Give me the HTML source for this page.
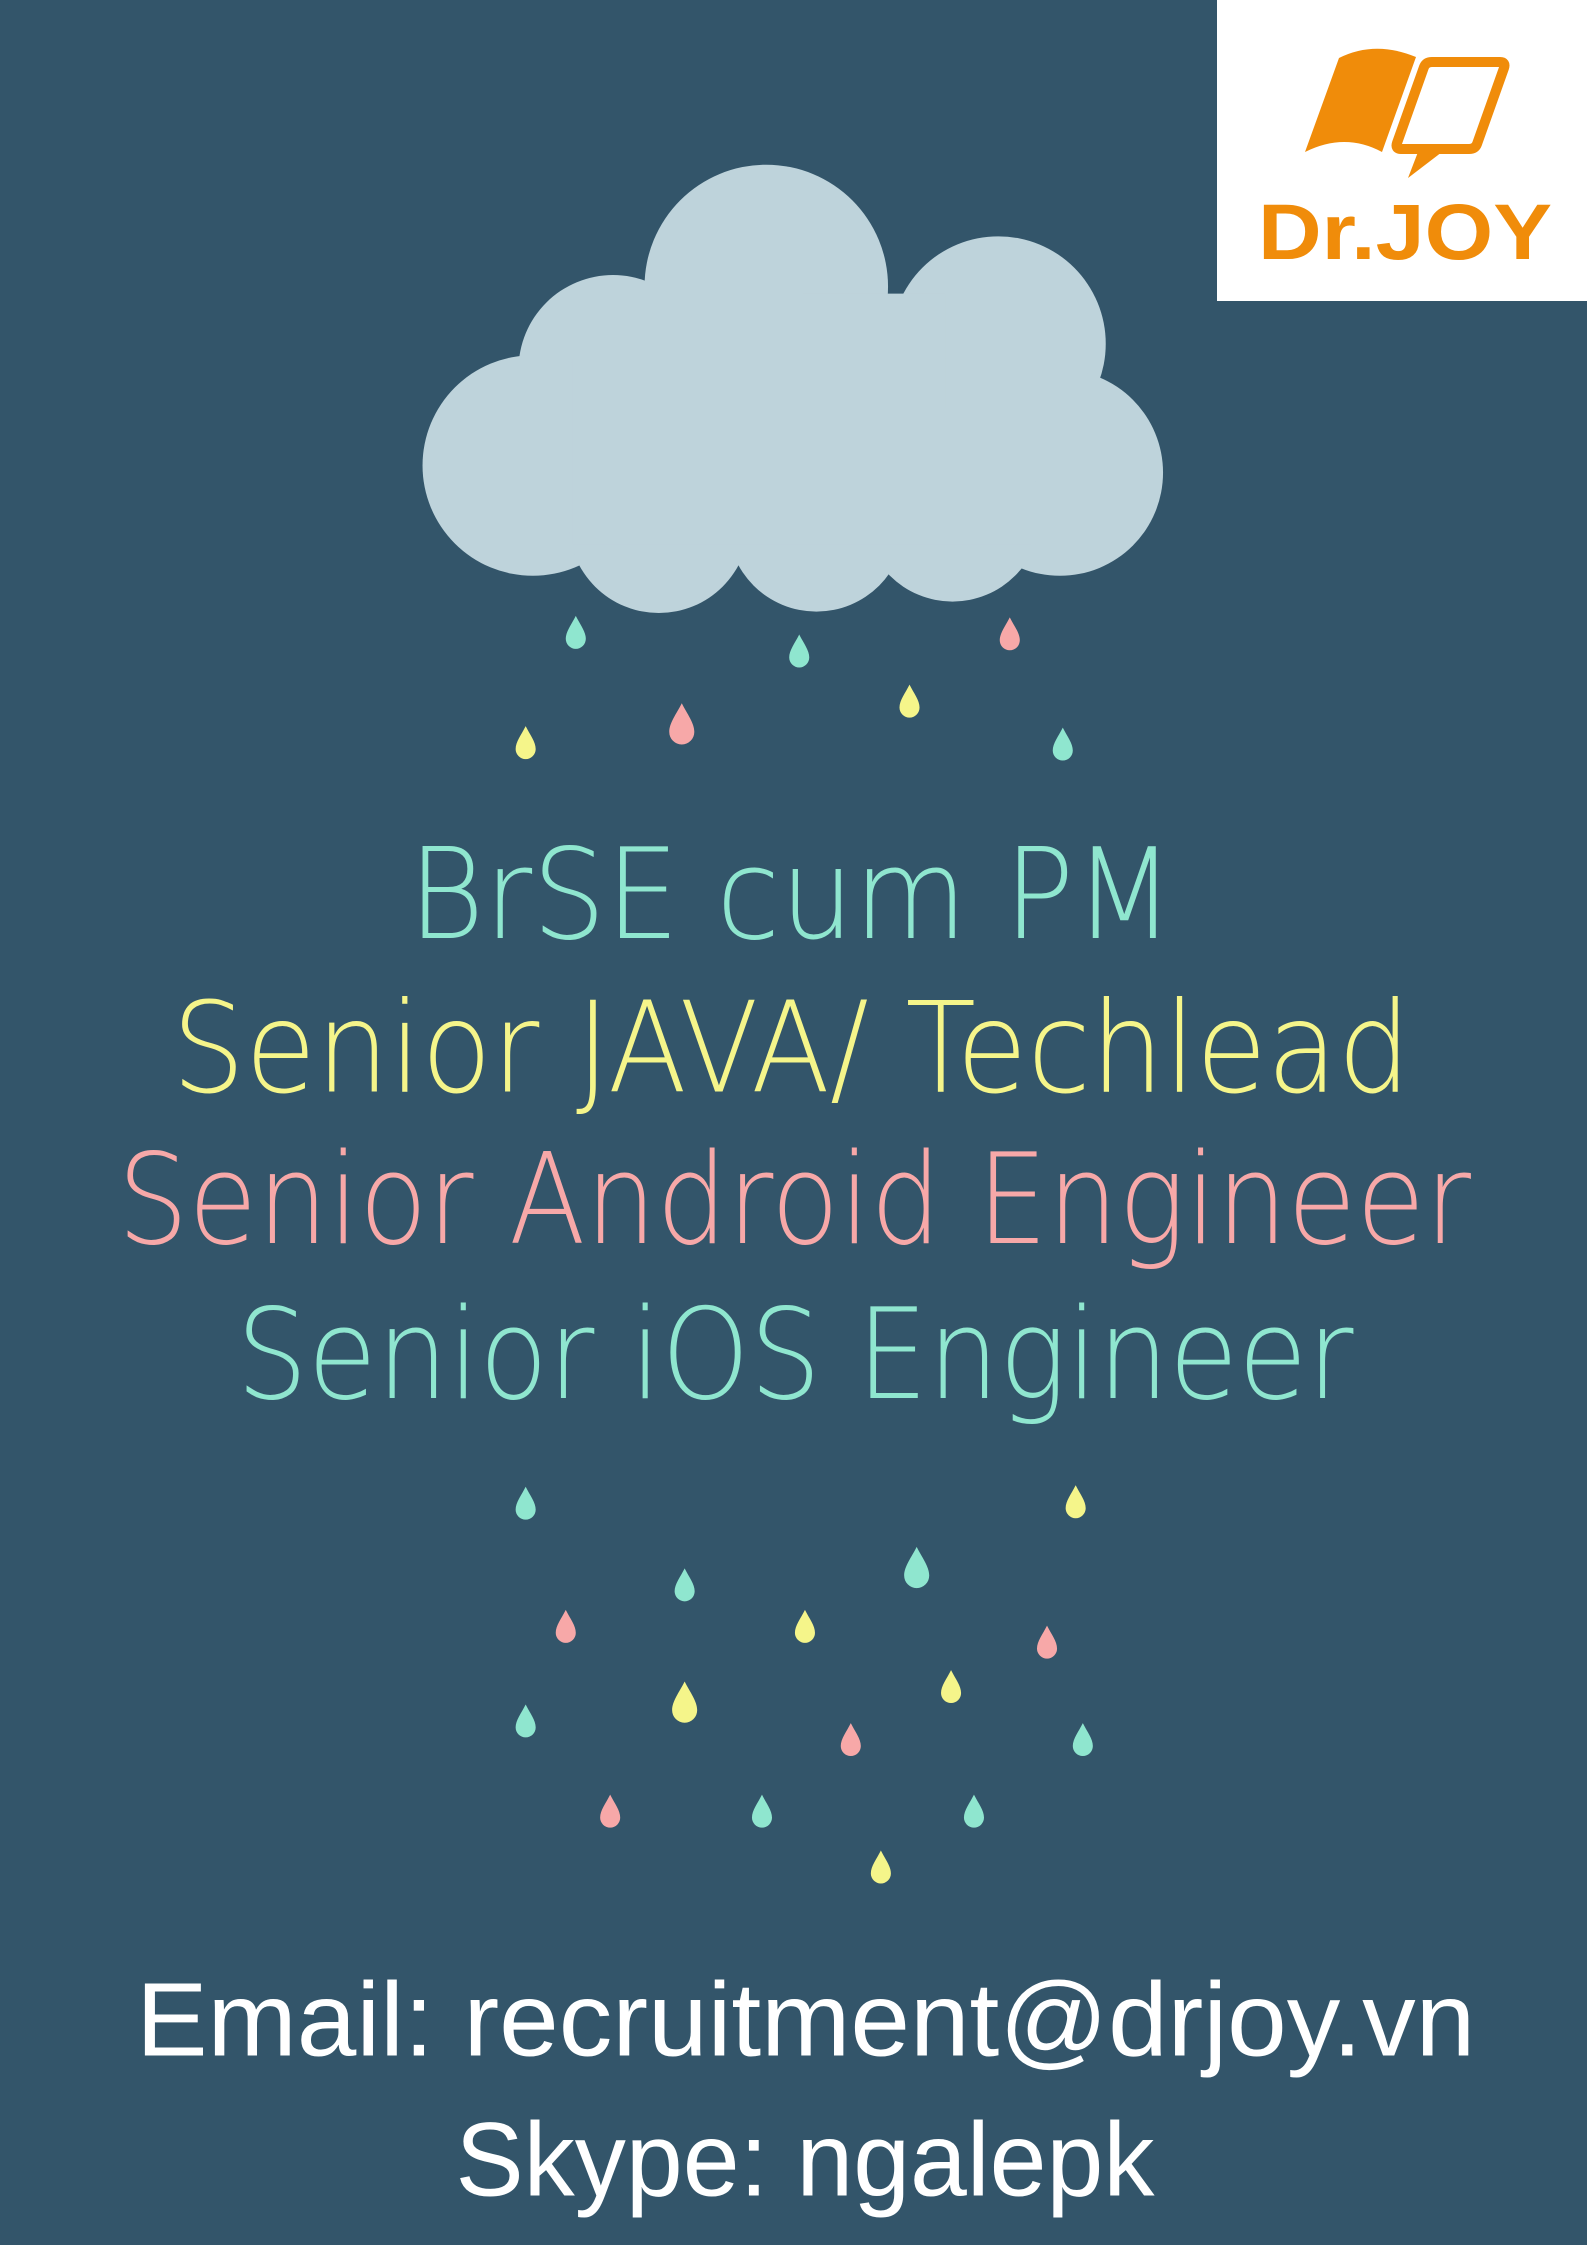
<!DOCTYPE html>
<html><head><meta charset="utf-8"><style>
html,body{margin:0;padding:0;background:#33556a;}
body{width:1587px;height:2245px;position:relative;overflow:hidden;}
svg{position:absolute;left:0;top:0;}
</style></head><body>
<svg width="1587" height="2245" viewBox="0 0 1108 1567.4" xmlns="http://www.w3.org/2000/svg">
<rect width="1108" height="1568" fill="#33556a"/>
<defs>
<path id="d" d="M0,-12 C3,-6 7,-1 7,4 A7,7 0 0 1 -7,4 C-7,-1 -3,-6 0,-12 Z"/>
<clipPath id="cc"><rect x="294" y="0" width="521" height="600"/></clipPath>
</defs>
<g fill="#bed3db" clip-path="url(#cc)">
<circle cx="535" cy="200" r="85"/>
<circle cx="697" cy="240" r="75"/>
<circle cx="428" cy="258" r="66"/>
<circle cx="372" cy="325" r="77"/>
<circle cx="740" cy="330" r="72"/>
<circle cx="460" cy="365" r="63"/>
<circle cx="570" cy="365" r="62"/>
<circle cx="665" cy="358" r="62"/>
<rect x="400" y="250" width="320" height="130"/>
<rect x="560" y="205" width="100" height="80"/>
</g>
<g>
<use href="#d" transform="translate(402,442)" fill="#8fe6cf"/>
<use href="#d" transform="translate(558,455)" fill="#8fe6cf"/>
<use href="#d" transform="translate(705,443)" fill="#f7a8a8"/>
<use href="#d" transform="translate(635,490)" fill="#f5f58a"/>
<use href="#d" transform="translate(476,506) scale(1.25)" fill="#f7a8a8"/>
<use href="#d" transform="translate(367,519)" fill="#f5f58a"/>
<use href="#d" transform="translate(742,520)" fill="#8fe6cf"/>
<use href="#d" transform="translate(367,1050)" fill="#8fe6cf"/>
<use href="#d" transform="translate(751,1049)" fill="#f5f58a"/>
<use href="#d" transform="translate(640,1095) scale(1.25)" fill="#8fe6cf"/>
<use href="#d" transform="translate(478,1107)" fill="#8fe6cf"/>
<use href="#d" transform="translate(395,1136)" fill="#f7a8a8"/>
<use href="#d" transform="translate(562,1136)" fill="#f5f58a"/>
<use href="#d" transform="translate(731,1147)" fill="#f7a8a8"/>
<use href="#d" transform="translate(664,1178)" fill="#f5f58a"/>
<use href="#d" transform="translate(478,1189) scale(1.25)" fill="#f5f58a"/>
<use href="#d" transform="translate(367,1202)" fill="#8fe6cf"/>
<use href="#d" transform="translate(756,1215)" fill="#8fe6cf"/>
<use href="#d" transform="translate(594,1215)" fill="#f7a8a8"/>
<use href="#d" transform="translate(426,1265)" fill="#f7a8a8"/>
<use href="#d" transform="translate(532,1265)" fill="#8fe6cf"/>
<use href="#d" transform="translate(680,1265)" fill="#8fe6cf"/>
<use href="#d" transform="translate(615,1304)" fill="#f5f58a"/>
</g>
<g font-family="DejaVu Sans, Liberation Sans, sans-serif" font-weight="200" font-size="88">
<text x="285" y="655" textLength="535" lengthAdjust="spacingAndGlyphs" fill="#8fe6cf">BrSE cum PM</text>
<text x="120" y="762" textLength="865" lengthAdjust="spacingAndGlyphs" fill="#f5f58a">Senior JAVA/ Techlead</text>
<text x="82" y="868" textLength="945" lengthAdjust="spacingAndGlyphs" fill="#f7a8a8">Senior Android Engineer</text>
<text x="165" y="976" textLength="780" lengthAdjust="spacingAndGlyphs" fill="#8fe6cf">Senior iOS Engineer</text>
</g>
<g font-family="Liberation Sans, sans-serif" font-size="73" fill="#ffffff">
<text x="95" y="1435" textLength="935" lengthAdjust="spacingAndGlyphs">Email: recruitment@drjoy.vn</text>
<text x="318" y="1533" textLength="488" lengthAdjust="spacingAndGlyphs">Skype: ngalepk</text>
</g>
</svg>
<svg width="1587" height="2245" viewBox="0 0 1587 2245" xmlns="http://www.w3.org/2000/svg">
<rect x="1217" y="0" width="370" height="301" fill="#ffffff"/>
<path d="M1339,58 Q1375,40 1416,57 L1382,152 Q1345,132 1305,152 Z" fill="#f08c0a"/>
<path d="M1432,62 L1500,62 Q1506,62 1504,68 L1477,144 Q1475,149 1469,149 L1401,149 Q1395,149 1397,143 L1424,67 Q1426,62 1432,62 Z" fill="none" stroke="#f08c0a" stroke-width="10"/>
<path d="M1418,152 L1408,178 L1442,152 Z" fill="#f08c0a"/>
<text x="1258" y="259" textLength="294" lengthAdjust="spacingAndGlyphs" font-family="Liberation Sans, sans-serif" font-weight="bold" font-size="79" fill="#f08c0a">Dr.JOY</text>
</svg>
</body></html>
